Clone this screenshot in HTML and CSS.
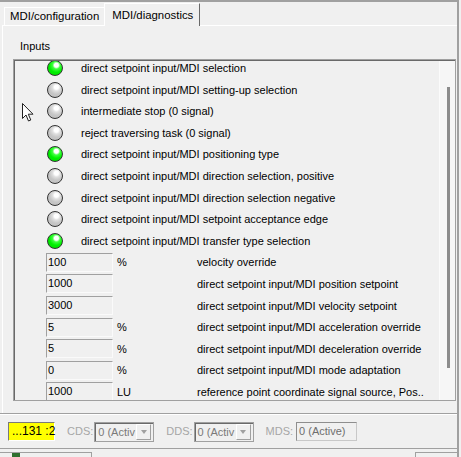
FILE: index.html
```html
<!DOCTYPE html>
<html>
<head>
<meta charset="utf-8">
<link rel="stylesheet" href="styles.css">
</head>
<body>
<div class="window">
  <div class="topline"></div>
  <div class="tabs">
    <div class="tab">MDI/configuration</div>
    <div class="tab active">MDI/diagnostics</div>
  </div>
  <div class="pane">
    <div class="group-label">Inputs</div>
    <div class="frame">
      <div class="frame-in">
        <div class="list">
          <div class="rows">
            <div class="row"><span class="led on"></span><span class="desc">direct setpoint input/MDI selection</span></div>
            <div class="row"><span class="led"></span><span class="desc">direct setpoint input/MDI setting-up selection</span></div>
            <div class="row"><span class="led"></span><span class="desc">intermediate stop (0 signal)</span></div>
            <div class="row"><span class="led"></span><span class="desc">reject traversing task (0 signal)</span></div>
            <div class="row"><span class="led on"></span><span class="desc">direct setpoint input/MDI positioning type</span></div>
            <div class="row"><span class="led"></span><span class="desc">direct setpoint input/MDI direction selection, positive</span></div>
            <div class="row"><span class="led"></span><span class="desc">direct setpoint input/MDI direction selection negative</span></div>
            <div class="row"><span class="led"></span><span class="desc">direct setpoint input/MDI setpoint acceptance edge</span></div>
            <div class="row"><span class="led on"></span><span class="desc">direct setpoint input/MDI transfer type selection</span></div>
            <div class="row"><span class="field">100</span><span class="unit">%</span><span class="fdesc">velocity override</span></div>
            <div class="row"><span class="field">1000</span><span class="unit"></span><span class="fdesc">direct setpoint input/MDI position setpoint</span></div>
            <div class="row"><span class="field">3000</span><span class="unit"></span><span class="fdesc">direct setpoint input/MDI velocity setpoint</span></div>
            <div class="row"><span class="field">5</span><span class="unit">%</span><span class="fdesc">direct setpoint input/MDI acceleration override</span></div>
            <div class="row"><span class="field">5</span><span class="unit">%</span><span class="fdesc">direct setpoint input/MDI deceleration override</span></div>
            <div class="row"><span class="field">0</span><span class="unit">%</span><span class="fdesc">direct setpoint input/MDI mode adaptation</span></div>
            <div class="row"><span class="field">1000</span><span class="unit">LU</span><span class="fdesc">reference point coordinate signal source, Pos..</span></div>
          </div>
        </div>
        <div class="scrollbar"><div class="thumb"></div></div>
      </div>
    </div>
  </div>
  <div class="sep"></div>
  <div class="status">
    <div class="yellow">...131 :2</div>
    <span class="lbl">CDS:</span>
    <div class="combo"><span class="ctext">0 (Activ</span><span class="cbtn"><span class="arrow"></span></span></div>
    <span class="lbl">DDS:</span>
    <div class="combo"><span class="ctext">0 (Activ</span><span class="cbtn"><span class="arrow"></span></span></div>
    <span class="lbl">MDS:</span>
    <div class="tbox">0 (Active)</div>
  </div>
  <div class="bottom">
    <div class="panel-a"><span class="green"></span></div>
    <div class="panel-b"></div>
  </div>
  <svg class="cursor" width="13" height="20" viewBox="0 0 13 20">
    <path d="M0.5 0.5 L0.5 15.5 L4 12 L6.5 18 L8.8 17 L6.3 11.2 L11 11.2 Z" fill="#fff" stroke="#222" stroke-width="1" stroke-linejoin="miter"/>
  </svg>
</div>
</body>
</html>
```

FILE: styles.css
```css
* { box-sizing: border-box; }

body {
  margin: 0;
  background: #f0f0f0;
  font-family: "Liberation Sans", Arial, sans-serif;
  font-size: 11px;
  color: #000;
}

.window {
  position: relative;
  width: 459px;
  height: 457px;
  border-right: 2px solid #a0a0a0;
  display: flex;
  flex-direction: column;
  overflow: hidden;
}

.topline {
  flex: none;
  height: 2px;
  background: #a0a0a0;
}

.tabs {
  flex: none;
  height: 23px;
  display: flex;
  align-items: flex-end;
  padding-left: 4px;
  position: relative;
  z-index: 1;
}

.tab {
  height: 18px;
  padding: 0 5px 0 5px;
  line-height: 16px;
  border-top: 1px solid #fff;
  border-left: 1px solid #fff;
  white-space: nowrap;
  font-size: 11.4px;
}

.tab.active {
  height: 23px;
  margin-bottom: -1px;
  padding: 3px 6px 0 7px;
  line-height: 17px;
  background: #f0f0f0;
  border-right: 1px solid #696969;
}

.pane {
  flex: none;
  height: 388px;
  margin-left: 2px;
  border-top: 1px solid #fff;
  border-left: 1px solid #fff;
}

.group-label {
  margin-top: 14px;
  padding-left: 17px;
  height: 13px;
  line-height: 13px;
}

.frame {
  margin-top: 6px;
  margin-left: 10px;
  width: 443px;
  height: 342px;
  border: 1px solid #a0a0a0;
}

.frame-in {
  height: 100%;
  display: flex;
  border-top: 1px solid #696969;
  border-left: 1px solid #696969;
}

.list {
  flex: 1;
  overflow: hidden;
}

.rows {
  margin-top: -3.8px;
}

.row {
  height: 21.6px;
  display: flex;
  align-items: center;
  white-space: nowrap;
}

.led {
  flex: none;
  width: 16px;
  height: 16px;
  margin-left: 32px;
  border-radius: 50%;
  border: 1.5px solid #333;
  background: radial-gradient(circle at 60% 30%, #ffffff 0, #ffffff 2px, #e0e0e0 3.8px, #c6c6c6 7px, #bdbdbd 100%);
}

.led.on {
  background: radial-gradient(circle at 60% 30%, #ffffff 0, #ffffff 2px, #40ff40 3.8px, #00f000 7px, #00d400 100%);
}

.desc {
  margin-left: 18px;
}

.field {
  flex: none;
  width: 67px;
  height: 19px;
  margin-left: 31px;
  padding-left: 1px;
  line-height: 17px;
  border-top: 1px solid #a0a0a0;
  border-left: 1px solid #a0a0a0;
  border-right: 1px solid #fafafa;
  border-bottom: 1px solid #fafafa;
}

.unit {
  flex: none;
  width: 84px;
  padding-left: 4px;
}

.scrollbar {
  flex: none;
  width: 16px;
  background: #f6f6f6;
  border-left: 1px solid #fbfbfb;
  padding-top: 26px;
}

.thumb {
  width: 3px;
  height: 281px;
  margin-left: 7px;
  background: #8c8c8c;
}

.sep {
  flex: none;
  height: 2px;
  border-top: 1px solid #a0a0a0;
  border-bottom: 1px solid #fff;
}

.status {
  flex: none;
  height: 33px;
  display: flex;
  align-items: flex-start;
  padding-top: 7px;
  padding-left: 8px;
}

.yellow {
  width: 47px;
  height: 19px;
  background: #ffff00;
  border-top: 1px solid #7a7a7a;
  border-left: 1px solid #7a7a7a;
  border-right: 1px solid #fff;
  border-bottom: 1px solid #fff;
  font-size: 12px;
  line-height: 17px;
  padding-left: 3px;
  white-space: nowrap;
}

.lbl {
  color: #a6a6a6;
  line-height: 19px;
  margin-left: 12px;
  margin-right: 1px;
}

.combo {
  width: 60px;
  height: 20px;
  display: flex;
  align-items: center;
  border: 1px solid #a0a0a0;
  box-shadow: inset 1px 1px 0 #6a6a6a;
  padding: 1px 2px 1px 2px;
}

.ctext {
  flex: 1;
  white-space: nowrap;
  color: #7a7a7a;
  line-height: 16px;
  padding-left: 1px;
}

.cbtn {
  flex: none;
  width: 15px;
  height: 16px;
  display: flex;
  align-items: center;
  justify-content: center;
  border-left: 1px solid #fff;
  border-top: 1px solid #fff;
  border-right: 1px solid #a0a0a0;
  border-bottom: 1px solid #a0a0a0;
}

.arrow {
  width: 0;
  height: 0;
  border-left: 3.5px solid transparent;
  border-right: 3.5px solid transparent;
  border-top: 4px solid #a0a0a0;
}

.tbox {
  width: 61px;
  height: 19px;
  margin-left: 2px;
  border: 1px solid #c8c8c8;
  border-top-color: #8e8e8e;
  border-left-color: #8e8e8e;
  color: #6e6e6e;
  line-height: 17px;
  padding-left: 2px;
  white-space: nowrap;
}

.bottom {
  flex: 1;
  display: flex;
  align-items: flex-start;
  border-top: 1px solid #a0a0a0;
  padding-top: 3px;
}

.panel-a {
  width: 92px;
  height: 8px;
  border-top: 1px solid #a0a0a0;
  border-right: 1px solid #a0a0a0;
  padding-left: 12px;
}

.green {
  display: block;
  width: 8px;
  height: 6px;
  background: #2f6f2f;
}

.panel-b {
  margin-left: auto;
  width: 42px;
  height: 8px;
  border-top: 1px solid #a0a0a0;
  border-left: 1px solid #a0a0a0;
}

.cursor {
  position: absolute;
  left: 22px;
  top: 103px;
}
```
